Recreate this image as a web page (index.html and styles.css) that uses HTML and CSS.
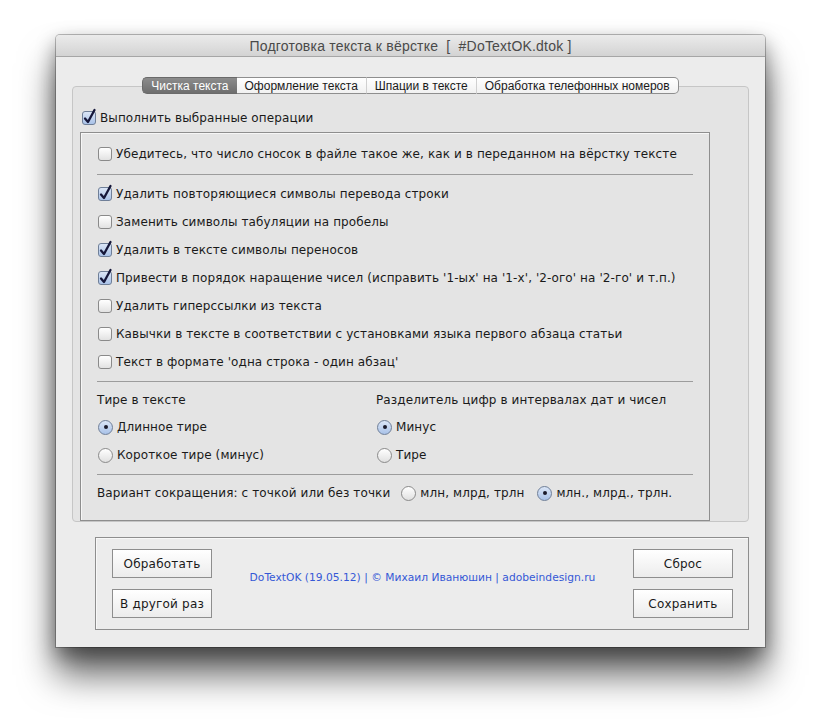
FILE: index.html
```html
<!DOCTYPE html>
<html>
    <head>
        <meta charset="utf-8">
        <link rel="stylesheet" href="styles.css">
        <title>DoTextOK</title>
    </head>
    <body>
        <div class="window">
            <div class="titlebar">Подготовка текста к вёрстке&nbsp; [&nbsp; #DoTextOK.dtok ]</div>
            <div class="content">
                <div class="tabpanel">
                    <div class="tabs">
                        <span class="tab active">Чистка текста</span>
                        <span class="tab">Оформление текста</span>
                        <span class="tab">Шпации в тексте</span>
                        <span class="tab">Обработка телефонных номеров</span>
                    </div>

                    <div class="row master">
                        <span class="box checked"><svg viewBox="0 0 14 14" width="14" height="14"><path d="M3 7.5 L6 11 L12.5 -1" /></svg></span>
                        <span>Выполнить выбранные операции</span>
                    </div>

                    <div class="group">
                        <div class="row"><span class="box"></span><span>Убедитесь, что число сносок в файле такое же, как и в переданном на вёрстку тексте</span></div>
                        <hr class="sep first">
                        <div class="row"><span class="box checked"><svg viewBox="0 0 14 14" width="14" height="14"><path d="M3 7.5 L6 11 L12.5 -1" /></svg></span><span>Удалить повторяющиеся символы перевода строки</span></div>
                        <div class="row"><span class="box"></span><span>Заменить символы табуляции на пробелы</span></div>
                        <div class="row"><span class="box checked"><svg viewBox="0 0 14 14" width="14" height="14"><path d="M3 7.5 L6 11 L12.5 -1" /></svg></span><span>Удалить в тексте символы переносов</span></div>
                        <div class="row"><span class="box checked"><svg viewBox="0 0 14 14" width="14" height="14"><path d="M3 7.5 L6 11 L12.5 -1" /></svg></span><span>Привести в порядок наращение чисел (исправить '1-ых' на '1-х', '2-ого' на '2-го' и т.п.)</span></div>
                        <div class="row"><span class="box"></span><span>Удалить гиперссылки из текста</span></div>
                        <div class="row"><span class="box"></span><span>Кавычки в тексте в соответствии с установками языка первого абзаца статьи</span></div>
                        <div class="row"><span class="box"></span><span>Текст в формате 'одна строка - один абзац'</span></div>
                        <hr class="sep">

                        <div class="columns">
                            <div class="col">
                                <div class="heading">Тире в тексте</div>
                                <div class="row"><span class="radio on"></span><span>Длинное тире</span></div>
                                <div class="row"><span class="radio"></span><span>Короткое тире (минус)</span></div>
                            </div>
                            <div class="col">
                                <div class="heading">Разделитель цифр в интервалах дат и чисел</div>
                                <div class="row"><span class="radio on"></span><span>Минус</span></div>
                                <div class="row"><span class="radio"></span><span>Тире</span></div>
                            </div>
                        </div>
                        <hr class="sep last">

                        <div class="row abbr">
                            <span class="label">Вариант сокращения: с точкой или без точки</span>
                            <span class="radio"></span><span class="opt">млн, млрд, трлн</span>
                            <span class="radio on"></span><span>млн., млрд., трлн.</span>
                        </div>
                    </div>
                </div>

                <div class="actions">
                    <div class="buttons">
                        <button class="btn">Обработать</button>
                        <button class="btn">В другой раз</button>
                    </div>
                    <div class="credits">DoTextOK (19.05.12) | © Михаил Иванюшин | adobeindesign.ru</div>
                    <div class="buttons">
                        <button class="btn">Сброс</button>
                        <button class="btn">Сохранить</button>
                    </div>
                </div>
            </div>
        </div>
    </body>
</html>
```

FILE: styles.css
```css
html {
    background: #ffffff;
}

body {
    margin: 0;
    padding: 35px 0 79px 56px;
    font-family: "DejaVu Sans", "Liberation Sans", sans-serif;
    font-size: 12px;
    letter-spacing: 0.1px;
    color: #1a1a1a;
}

.window {
    width: 709px;
    height: 612px;
    background: #ececec;
    border-radius: 4px 4px 0 0;
    box-shadow: 0 28px 36px rgba(0, 0, 0, 0.6), 0 8px 20px rgba(0, 0, 0, 0.4), 0 0 0 1px rgba(0, 0, 0, 0.25);
    overflow: hidden;
}

.titlebar {
    height: 21px;
    line-height: 22px;
    text-align: center;
    font-family: "Liberation Sans", sans-serif;
    font-size: 14px;
    letter-spacing: 0.2px;
    color: #4a4a4a;
    background: linear-gradient(#ebebeb, #d3d3d3);
    border-bottom: 1px solid #a6a6a6;
}

.content {
    padding: 29px 16px 0 16px;
}

/* tab panel */
.tabpanel {
    height: 434px;
    background: #e4e4e4;
    border: 1px solid #c6c6c6;
    border-radius: 4px;
    padding: 0 0 0 9px;
}

.tabs {
    display: flex;
    justify-content: center;
    margin: -10px 0 0 -9px;
}

.tab {
    height: 15px;
    line-height: 16px;
    padding: 0 8px;
    font-family: "Liberation Sans", sans-serif;
    font-size: 12px;
    letter-spacing: 0;
    color: #1a1a1a;
    background: linear-gradient(#ffffff, #f1f1f1);
    border: 1px solid #8e8e8e;
    border-left: 1px solid #d0d0d0;
    border-right: none;
}

.tab:first-child {
    border-left: 1px solid #6a6a6a;
    border-radius: 5px 0 0 5px;
}

.tab:last-child {
    border-right: 1px solid #8e8e8e;
    border-radius: 0 5px 5px 0;
}

.tab.active {
    color: #ffffff;
    background: linear-gradient(#8c8c8c, #6e6e6e);
    border-color: #6a6a6a;
}

.tab.active + .tab {
    border-left: none;
}

/* rows */
.row {
    display: flex;
    align-items: center;
    height: 28px;
    white-space: nowrap;
}

.master {
    height: 20px;
    margin-top: 14px;
}

.master .box {
    margin: 0 4px 0 0;
}

.box {
    position: relative;
    flex: none;
    width: 12px;
    height: 12px;
    margin: 0 4px 0 1px;
    border: 1px solid #8a8a8a;
    border-radius: 3px;
    background: linear-gradient(#ffffff, #e2e2e2);
}

.box.checked {
    background: linear-gradient(#dbe6f7, #a9c2e8);
    border-color: #6f7f98;
}

.box svg {
    position: absolute;
    left: -1px;
    top: -1px;
    overflow: visible;
}

.box svg path {
    fill: none;
    stroke: #15173a;
    stroke-width: 2.3;
    stroke-linecap: round;
    stroke-linejoin: round;
}

.radio {
    position: relative;
    flex: none;
    width: 13px;
    height: 13px;
    margin: 0 4px 0 0;
    border: 1px solid #8a8a8a;
    border-radius: 50%;
    background: linear-gradient(#ffffff, #e0e0e0);
}

.radio.on {
    background: linear-gradient(#dbe6f7, #a9c2e8);
    border-color: #6f7f98;
}

.radio.on::after {
    content: "";
    position: absolute;
    left: 4.5px;
    top: 4.5px;
    width: 4px;
    height: 4px;
    border-radius: 50%;
    background: #1a1a2a;
}

/* inner group */
.group {
    margin: 4px 38px 0 -2px;
    height: 380px;
    border: 1px solid #8e8e8e;
    box-shadow: inset 1px 1px 0 #f6f6f6;
    padding: 7px 16px 0 16px;
}

.sep {
    margin: 5px 0 5px 0;
    border: none;
    border-top: 1px solid #9c9c9c;
    height: 0;
}

.sep.first {
    margin-top: 6px;
}

.sep.last {
    margin-bottom: 4px;
}

.columns {
    display: flex;
}

.col {
    flex: none;
    width: 279px;
    white-space: nowrap;
}

.heading {
    height: 26px;
    line-height: 26px;
}

.col .row {
    padding-left: 1px;
}

.abbr .label {
    margin-right: 11px;
}

.abbr .opt {
    margin-right: 13px;
}

/* bottom buttons */
.actions {
    display: flex;
    align-items: center;
    justify-content: space-between;
    margin: 15px 0 0 23px;
    height: 91px;
    border: 1px solid #8e8e8e;
    box-shadow: inset 1px 1px 0 #f8f8f8;
    padding: 0 15px 0 16px;
}

.buttons {
    display: flex;
    flex-direction: column;
    gap: 11px;
}

.btn {
    width: 100px;
    height: 29px;
    padding: 0;
    font-family: "DejaVu Sans", sans-serif;
    font-size: 12px;
    letter-spacing: 0.2px;
    color: #1a1a1a;
    background: linear-gradient(#ffffff, #ececec);
    border: 1px solid #8e8e8e;
    border-radius: 0;
}

.credits {
    margin-bottom: 13px;
    font-size: 10.7px;
    letter-spacing: 0;
    color: #3558d6;
}
```
